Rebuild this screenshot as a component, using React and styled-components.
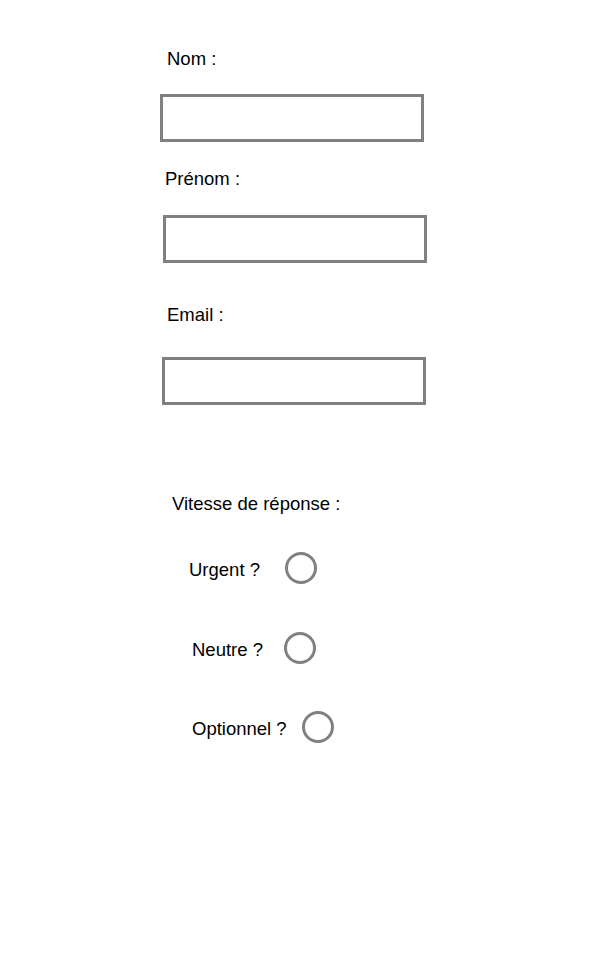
import styled, { createGlobalStyle } from "styled-components";

const GlobalStyle = createGlobalStyle`
    html, body {
        margin: 0;
        padding: 0;
        background: #ffffff;
    }
    body {
        font-family: "Liberation Sans", Arial, sans-serif;
        color: #000000;
    }
`;

const Form = styled.form`
    width: 612px;
    min-height: 956px;
    display: flex;
    flex-direction: column;
    align-items: flex-start;
    box-sizing: border-box;
`;

const FieldLabel = styled.label`
    display: block;
    font-size: 18.5px;
    line-height: 21px;
    margin-left: ${(p) => p.$x}px;
    margin-top: ${(p) => p.$top}px;
`;

const FieldBox = styled.input`
    display: block;
    width: 264px;
    height: 48px;
    box-sizing: border-box;
    border: 3px solid #808080;
    background: #ffffff;
    outline: none;
    padding: 0 8px;
    font-family: inherit;
    font-size: 16px;
    margin-left: ${(p) => p.$x}px;
    margin-top: ${(p) => p.$top}px;
`;

const SectionTitle = styled.p`
    margin: 0;
    font-size: 18.5px;
    line-height: 21px;
    margin-left: ${(p) => p.$x}px;
    margin-top: ${(p) => p.$top}px;
`;

const ChoiceRow = styled.label`
    display: flex;
    align-items: center;
    gap: ${(p) => p.$gap}px;
    margin-left: ${(p) => p.$x}px;
    margin-top: ${(p) => p.$top}px;
`;

const ChoiceLabel = styled.span`
    font-size: 18.5px;
    line-height: 21px;
    padding-top: 2px;
`;

const RadioCircle = styled.span`
    display: block;
    width: 32px;
    height: 32px;
    box-sizing: border-box;
    border: 3px solid #808080;
    border-radius: 50%;
    background: #ffffff;
`;

const fields = [
    { label: "Nom :", labelX: 167, labelTop: 48, boxX: 160, boxTop: 25 },
    { label: "Prénom :", labelX: 165, labelTop: 26, boxX: 163, boxTop: 26 },
    { label: "Email :", labelX: 167, labelTop: 41, boxX: 162, boxTop: 32 },
];

const choices = [
    { label: "Urgent ?", x: 189, top: 38, gap: 25 },
    { label: "Neutre ?", x: 192, top: 48, gap: 21 },
    { label: "Optionnel ?", x: 192, top: 47, gap: 15 },
];

const App = () => {
    return (
        <>
            <GlobalStyle />
            <Form onSubmit={(e) => e.preventDefault()}>
                {fields.map((f) => (
                    <div key={f.label}>
                        <FieldLabel $x={f.labelX} $top={f.labelTop}>{f.label}</FieldLabel>
                        <FieldBox type="text" $x={f.boxX} $top={f.boxTop} />
                    </div>
                ))}

                <SectionTitle $x={172} $top={88}>Vitesse de réponse :</SectionTitle>

                {choices.map((c) => (
                    <ChoiceRow key={c.label} $x={c.x} $top={c.top} $gap={c.gap}>
                        <ChoiceLabel>{c.label}</ChoiceLabel>
                        <RadioCircle />
                    </ChoiceRow>
                ))}
            </Form>
        </>
    );
};

export default App;
